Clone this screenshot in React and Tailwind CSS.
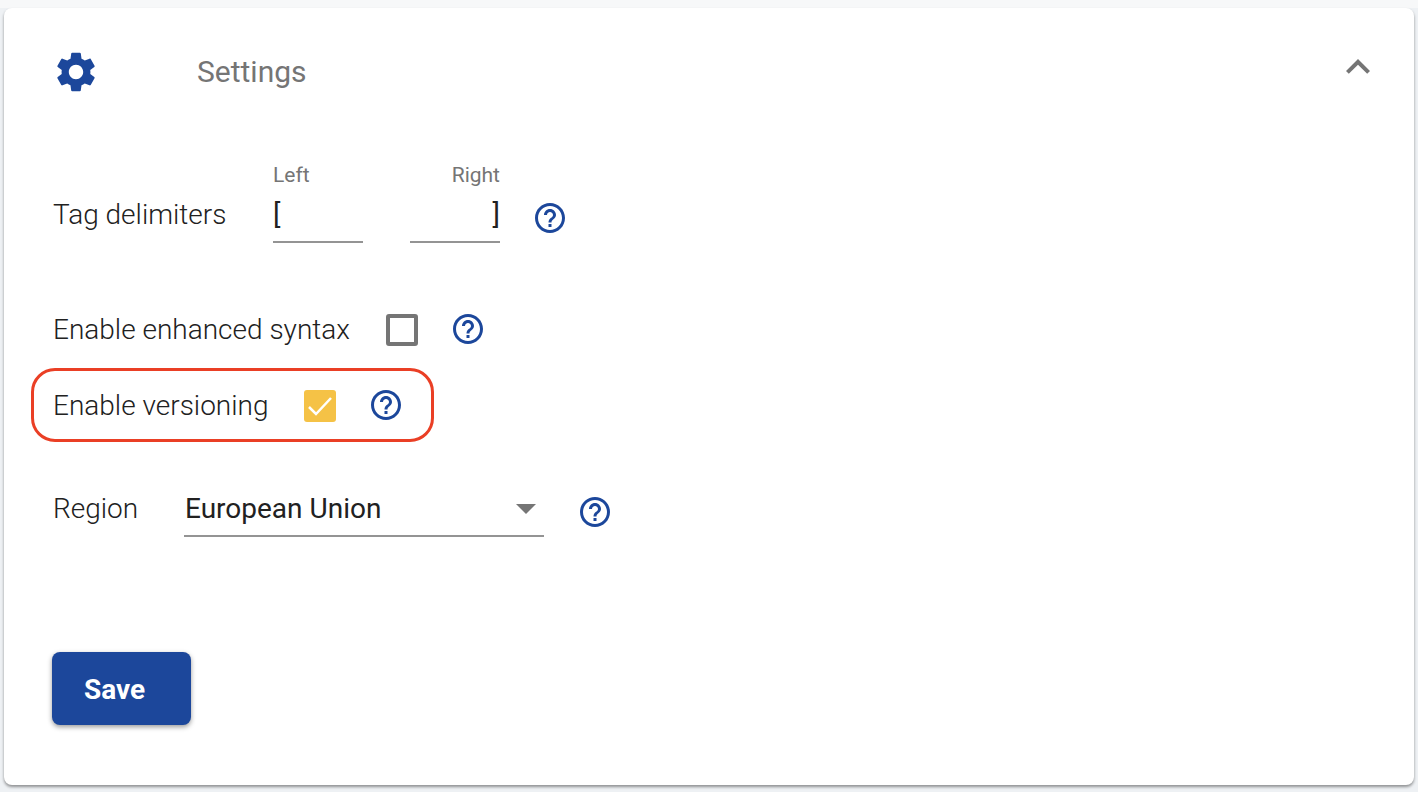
import React from "react";

const helpPath =
  "M11 18h2v-2h-2v2zm1-16C6.48 2 2 6.48 2 12s4.48 10 10 10 10-4.48 10-10S17.52 2 12 2zm0 18c-4.41 0-8-3.59-8-8s3.59-8 8-8 8 3.59 8 8-3.59 8-8 8zm0-14c-2.21 0-4 1.79-4 4h2c0-1.1.9-2 2-2s2 .9 2 2c0 2-3 1.75-3 5h2c0-2.25 3-2.5 3-5 0-2.21-1.79-4-4-4z";

const gearPath =
  "M19.14,12.94c0.04-0.3,0.06-0.61,0.06-0.94c0-0.32-0.02-0.64-0.07-0.94l2.03-1.58c0.18-0.14,0.23-0.41,0.12-0.61 l-1.92-3.32c-0.12-0.22-0.37-0.29-0.59-0.22l-2.39,0.96c-0.5-0.38-1.03-0.7-1.62-0.94L14.4,2.81c-0.04-0.24-0.24-0.41-0.48-0.41 h-3.84c-0.24,0-0.43,0.17-0.47,0.41L9.25,5.35C8.66,5.59,8.12,5.92,7.63,6.29L5.24,5.33c-0.22-0.08-0.47,0-0.59,0.22L2.74,8.87 C2.62,9.08,2.66,9.34,2.86,9.48l2.03,1.58C4.84,11.36,4.8,11.69,4.8,12s0.02,0.64,0.07,0.94l-2.03,1.58 c-0.18,0.14-0.23,0.41-0.12,0.61l1.92,3.32c0.12,0.22,0.37,0.29,0.59,0.22l2.39-0.96c0.5,0.38,1.03,0.7,1.62,0.94l0.36,2.54 c0.05,0.24,0.24,0.41,0.48,0.41h3.84c0.24,0,0.44-0.17,0.47-0.41l0.36-2.54c0.59-0.24,1.13-0.56,1.62-0.94l2.39,0.96 c0.22,0.08,0.47,0,0.59-0.22l1.92-3.32c0.12-0.22,0.07-0.47-0.12-0.61L19.14,12.94z M12,15.6c-1.98,0-3.6-1.62-3.6-3.6 s1.62-3.6,3.6-3.6s3.6,1.62,3.6,3.6S13.98,15.6,12,15.6z";

const HelpIcon = ({ className }) => (
  <svg viewBox="0 0 24 24" className={`w-9 h-9 fill-[#1c479b] ${className}`}>
    <path d={helpPath} />
  </svg>
);

const App = () => {
  return (
    <div className="h-[792px] overflow-hidden bg-[#eef1f4] font-['Roboto',sans-serif] text-[28px] text-[#212121]">
      <div className="h-2 bg-[#f7f8f9]"></div>
      <div className="mx-1 h-[777px] rounded-lg bg-white shadow-[0_2px_3px_rgba(0,0,0,0.4)] pl-12 pr-8">
        {/* header */}
        <div className="flex items-start h-[128px]">
          <svg viewBox="0 0 24 24" className="w-12 h-12 mt-10 fill-[#1c479b] shrink-0">
            <path d={gearPath} />
          </svg>
          <span className="ml-[97px] mt-[44px] text-[30px] text-[#757575] leading-10">Settings</span>
          <svg viewBox="0 0 24 24" className="w-12 h-12 mt-[35px] ml-auto fill-[#757575] shrink-0">
            <path d="M12 8l-6 6 1.41 1.41L12 10.83l4.59 4.58L18 14z" />
          </svg>
        </div>

        {/* tag delimiters */}
        <div className="flex items-start mt-[24px] h-[100px]">
          <span className="mt-[35px] leading-10 w-[221px] font-light pl-px">Tag delimiters</span>
          <div className="w-[90px] mt-[3px]">
            <div className="text-[21px] leading-6 text-[#757575]">Left</div>
            <div className="h-[54px] leading-[52px] border-b-2 border-[#949494] mt-[2px]">[</div>
          </div>
          <div className="w-[90px] ml-[47px] mt-[3px] text-right">
            <div className="text-[21px] leading-6 text-[#757575]">Right</div>
            <div className="h-[54px] leading-[52px] border-b-2 border-[#949494] mt-[2px]">]</div>
          </div>
          <HelpIcon className="ml-[32px] mt-[40px]" />
        </div>

        {/* checkboxes */}
        <div className="flex items-center mt-[50px] h-[40px]">
          <span className="font-light pl-px">Enable enhanced syntax</span>
          <span className="ml-[36px] w-8 h-8 rounded-[3px] border-[4px] border-[#757575]"></span>
          <HelpIcon className="ml-[32px] mb-[2px]" />
        </div>

        <div className="relative flex items-center mt-[36px] h-[40px]">
          <span className="font-light pl-px">Enable versioning</span>
          <span className="ml-[36px] w-8 h-8 rounded-[3px] bg-[#f5c246] flex items-center justify-center">
            <svg viewBox="0 0 32 32" className="w-8 h-8 fill-none stroke-white stroke-[2.5]">
              <path d="M5 17l7 7 15-16" />
            </svg>
          </span>
          <HelpIcon className="ml-[32px] mb-[2px]" />
          <div className="absolute left-[-21px] top-[-18px] w-[403px] h-[74px] rounded-[24px] border-[3.5px] border-[#ea3f25]"></div>
        </div>

        {/* region */}
        <div className="flex items-start mt-[63px]">
          <span className="leading-10 w-[132px] font-light pl-px">Region</span>
          <div className="w-[360px] h-[48px] border-b-2 border-[#949494] flex items-start justify-between leading-10 pl-[1px]">
            <span>European Union</span>
            <svg viewBox="0 0 20 10" className="w-5 h-[10px] mt-[15px] mr-2 fill-[#757575]">
              <path d="M0 0h20L10 10z" />
            </svg>
          </div>
          <HelpIcon className="ml-[33px] mt-[5px]" />
        </div>

        <button className="mt-[115px] w-[139px] h-[73px] rounded-lg bg-[#1c479b] text-white font-bold text-left pl-[32px] pt-[2px] shadow-[0_2px_5px_rgba(0,0,0,0.4)]">
          Save
        </button>
      </div>
    </div>
  );
};

export default App;
